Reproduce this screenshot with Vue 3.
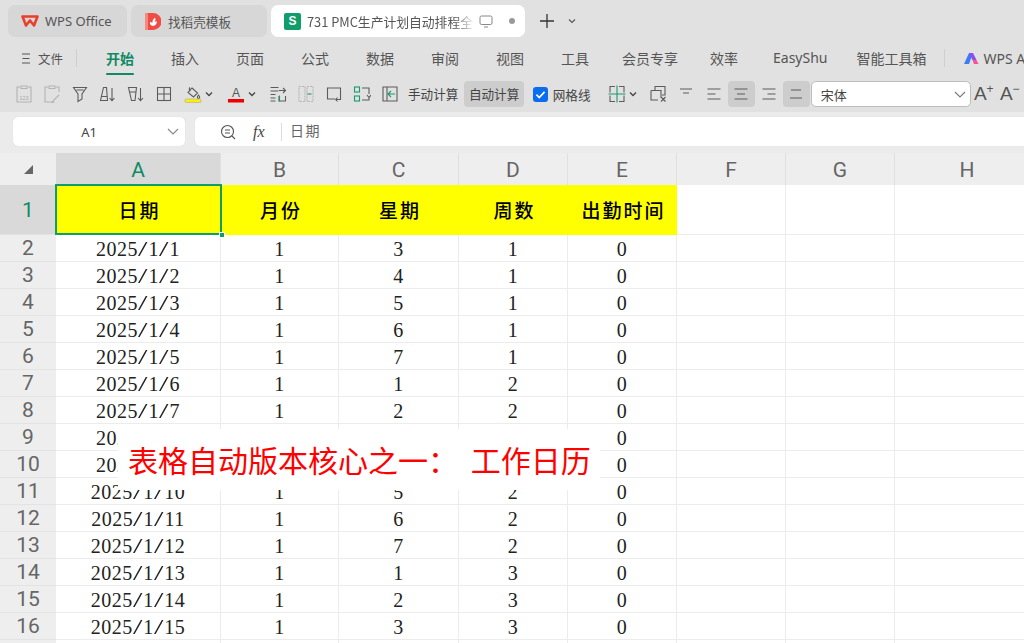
<template>
  <div class="app">
    <!-- tabs -->
    <div class="tabbar">
      <div class="tab tab-wps">
        <svg class="logo-w" viewBox="0 0 18 12"><path d="M1.500 1.500h15L13 10.500 9 5.500 5 10.500z" fill="none" stroke="#e8402c" stroke-width="2.600" stroke-linejoin="round" /></svg>
        <span class="tab-latin">WPS Office</span>
      </div>
      <div class="tab tab-tpl">
        <svg class="logo-d" viewBox="0 0 16 17"><path d="M0 1.500Q0 0 1.500 0H8a8 8 0 0 1 0 17H1.500Q0 17 0 15.500z" fill="#ef4c45" /><path d="M0 1.500Q0 0 1.500 0H3v17H1.500Q0 17 0 15.500z" fill="#f58a80" /><path d="M8 13c-2.500-.5-3.500-2-3-4 1 0 1.800.5 2.300 1.200C7.300 8 8.200 6 10 4.500c.7 2 .6 3-.3 4.500 1-.5 1.600-.6 2.300-.6-.3 2.500-1.800 4.300-4 4.600z" fill="#fff" /></svg>
        <span>找稻壳模板</span>
      </div>
      <div class="tab tab-active">
        <span class="logo-s">S</span>
        <span class="tab-title">731 PMC生产计划自动排程全自动版</span>
        <svg class="tab-monitor" viewBox="0 0 14 13"><rect x="1" y="1" width="12" height="8.500" rx="1.500" /><path d="M5 12h4" /></svg>
        <span class="tab-dot"></span>
      </div>
      <svg class="tab-plus" viewBox="0 0 16 16"><path d="M8 1v14M1 8h14" /></svg>
      <svg class="tab-chev" viewBox="0 0 8 6"><path d="M1 1.500l3 3 3-3" /></svg>
    </div>

    <!-- menu -->
    <div class="menubar">
      <svg class="menu-burger" viewBox="0 0 10 11"><path d="M1 1h8M1.500 5.500h7M1 10h8" /></svg>
      <span class="menu-file">文件</span>
      <span class="menu-sep"></span>
      <span v-for="m in menus" :key="m.label" class="menu-item" :class="[m.cls, { on: m.on }]">{{ m.label }}</span>
      <span class="menu-sep sep-ai"></span>
      <svg class="logo-ai" viewBox="0 0 16 13">
        <path d="M0 12L5 1h4L5 12z" fill="#3d7bf5" />
        <path d="M5 1h4l3.500 7H8.500z" fill="#8a4df0" />
        <path d="M8.500 8h4l2 4h-4.500z" fill="#f0559a" />
      </svg>
      <span class="menu-ai">WPS AI</span>
    </div>

    <!-- toolbar -->
    <div class="toolbar">
      <span class="tool"><svg class="ic off" viewBox="0 0 18 18"><path d="M5 2H2v15h14V2h-3M6 1h6v2.500H6z" /><text x="9" y="14.500" class="ic-txt">123</text></svg></span>
      <span class="tool"><svg class="ic off" viewBox="0 0 18 18"><path d="M5 2H2v15h7M13 2h3v5M6 1h6v2.500H6zM10 16l6-6" /><path d="M10 16l-1 1.500 2.500-.5" /></svg></span>
      <span class="tool"><svg class="ic" viewBox="0 0 18 18"><path d="M2.500 2.500h13L11 9v5l-4 2.500V9zM5.500 5h7" /></svg></span>
      <span class="tool"><svg class="ic" viewBox="0 0 18 18"><path d="M4.500 2.500h3l1 13H1.500zM2.500 11.500h6M13 3v12.500M10.500 13l2.500 2.700 2.500-2.700" /></svg></span>
      <span class="tool"><svg class="ic" viewBox="0 0 18 18"><path d="M1.500 2.500h8l-1.500 13H4.500zM2.500 7h6M13.500 3v12.500M11 13l2.500 2.700L16 13" /></svg></span>
      <span class="tool"><svg class="ic" viewBox="0 0 18 18"><rect x="2.500" y="2.500" width="13" height="13" /><path d="M9 2.500v13M2.500 9h13" /></svg></span>
      <span class="tool tool-wide">
        <svg class="ic" viewBox="0 0 18 18"><path d="M8 3l5.500 5-4 4L4 7.500zM6 2.500C5 3.500 5 5.500 6.500 6M14.500 10c.8 1 1.200 1.600 1.200 2.200a1.200 1.200 0 0 1-2.400 0c0-.6.400-1.200 1.200-2.200z" /><rect class="bar-yellow" x="1" y="14" width="16" height="3.500" rx="1" /></svg>
        <svg class="chev" viewBox="0 0 8 6"><path d="M1 1.500l3 3 3-3" /></svg>
      </span>
      <span class="tool tool-wide">
        <svg class="ic" viewBox="0 0 18 18"><text x="9" y="12" class="ic-a">A</text><rect class="bar-red" x="1" y="14" width="16" height="3.500" /></svg>
        <svg class="chev" viewBox="0 0 8 6"><path d="M1 1.500l3 3 3-3" /></svg>
      </span>
      <span class="tool"><svg class="ic" viewBox="0 0 18 18"><path d="M1.500 2.500h8M1.500 6h8M1.500 9.500h5M1.500 13h5M1.500 16h5M10 5.500h6.500M14 3l2.500 2.500L14 8M10 11v5h6.500v-5" /><path class="gr" d="M10.500 10.500v6" /></svg></span>
      <span class="tool"><svg class="ic off" viewBox="0 0 18 18"><rect x="2" y="1.500" width="6" height="15" stroke-dasharray="2 1" /><rect x="10" y="1.500" width="6" height="15" stroke-dasharray="2 1" /><path class="gr" d="M10.500 9h4" /></svg></span>
      <span class="tool"><svg class="ic" viewBox="0 0 18 18"><path d="M10 14H2.500V3h13v8M15.500 11v3.500H11M12.500 12.500L10.700 14.500l1.800 2" /></svg></span>
      <span class="tool"><svg class="ic" viewBox="0 0 18 18"><rect class="gr" x="1.500" y="2" width="5" height="5" /><rect class="gr" x="1.500" y="11" width="5" height="5" /><path d="M9 3h7v6M9 15h7v-3M14 10l2 2.500 2-2.500" /></svg></span>
      <span class="tool"><svg class="ic" viewBox="0 0 18 18"><path d="M6 2H2v14h4M6 2h10v14H6z" /><path class="gr" d="M14 9H7.500M10 6L7 9l3 3" /></svg></span>

      <span class="calc">手动计算</span>
      <span class="calc calc-on">自动计算</span>
      <label class="grid-check">
        <span class="check-box"><svg viewBox="0 0 14 14"><path d="M3.200 7.200l2.600 2.600 5-5.300" /></svg></span>
        <span>网格线</span>
      </label>

      <span class="tool tool-wide tool-split">
        <svg class="ic" viewBox="0 0 18 18"><path d="M7 1.500H2v6M11 1.500h5v6M7 16.500H2v-6M11 16.500h5v-6" /><path class="gr" d="M9 .5v17M.5 9h17" /></svg>
        <svg class="chev" viewBox="0 0 8 6"><path d="M1 1.500l3 3 3-3" /></svg>
      </span>
      <span class="tool"><svg class="ic" viewBox="0 0 18 18"><path d="M6 5V1.500h10V10h-3M2 5.500h10V13M2 5.500V15h7M12 12l4.500 4.500M16.500 12L12 16.500" /></svg></span>
      <span class="tool"><svg class="ic" viewBox="0 0 18 18"><path d="M3 4h12M6 8h6" /></svg></span>
      <span class="tool"><svg class="ic" viewBox="0 0 18 18"><path d="M2.500 4h13M2.500 9h8M2.500 14h13" /></svg></span>
      <span class="tool tool-sel"><svg class="ic" viewBox="0 0 18 18"><path d="M2.500 4h13M5 9h8M2.500 14h13" /></svg></span>
      <span class="tool"><svg class="ic" viewBox="0 0 18 18"><path d="M2.500 4h13M7.500 9h8M2.500 14h13" /></svg></span>
      <span class="tool tool-sel"><svg class="ic" viewBox="0 0 18 18"><path d="M4 5h10M3 13h12" /></svg></span>

      <div class="font-select">
        <span>宋体</span>
        <svg viewBox="0 0 12 7"><path d="M1 1l5 5 5-5" /></svg>
      </div>
      <span class="font-size">A<sup>+</sup></span>
      <span class="font-size">A<sup>−</sup></span>
    </div>

    <!-- formula bar -->
    <div class="formula-row">
      <div class="name-box">
        <span>A1</span>
        <svg viewBox="0 0 12 7"><path d="M1 1l5 5 5-5" /></svg>
      </div>
      <div class="formula-box">
        <svg class="fx-zoom" viewBox="0 0 16 16"><circle cx="7.500" cy="7.500" r="6" /><path d="M5 6h5M5 9h5M12 12l3 3" /></svg>
        <i class="fx">fx</i>
        <span class="formula-sep"></span>
        <span class="formula-text">日期</span>
      </div>
    </div>

    <!-- sheet -->
    <div class="sheet">
      <div class="corner"><span class="corner-mark"></span></div>
      <div v-for="(c, i) in cols" :key="c" class="col-head" :class="{ sel: i === 0 }">{{ c }}</div>

      <div class="row-head row-first sel">1</div>
      <div v-for="(h, i) in heads" :key="h" class="cell head-cell" :class="{ 'cell-active': i === 0 }">
        {{ h }}
        <template v-if="i === 0"><span class="sel-box"></span><span class="sel-handle"></span></template>
      </div>
      <div v-for="c in 3" :key="'blank' + c" class="cell cell-tall"></div>

      <template v-for="(r, n) in rows" :key="n">
        <div class="row-head">{{ n + 2 }}</div>
        <div class="cell num">2025<span class="sl">/</span>1<span class="sl">/</span>{{ r[0] }}</div>
        <div class="cell num">1</div>
        <div class="cell num">{{ r[1] }}</div>
        <div class="cell num">{{ r[2] }}</div>
        <div class="cell num">0</div>
        <div class="cell"></div>
        <div class="cell"></div>
        <div class="cell"></div>
      </template>

      <div class="caption">表格自动版本核心之一： 工作日历</div>
    </div>
  </div>
</template>

<script setup>
const menus = [
  { label: '开始', on: true },
  { label: '插入' },
  { label: '页面' },
  { label: '公式' },
  { label: '数据' },
  { label: '审阅' },
  { label: '视图' },
  { label: '工具' },
  { label: '会员专享', cls: 'm-vip' },
  { label: '效率', cls: 'm-eff' },
  { label: 'EasyShu', cls: 'm-easy' },
  { label: '智能工具箱', cls: 'm-box' },
]

const cols = ['A', 'B', 'C', 'D', 'E', 'F', 'G', 'H']
const heads = ['日期', '月份', '星期', '周数', '出勤时间']

// weekday and week number follow from the date, 2025/1/1 was a Wednesday
const rows = []
for (let d = 1; d <= 16; d++) {
  const weekday = ((d + 1) % 7) + 1
  const week = d <= 5 ? 1 : d <= 12 ? 2 : 3
  rows.push([d, weekday, week])
}
</script>

<style>
html, body { margin: 0; background: #e1e1e1; }
</style>

<style scoped>
.app { width: 1024px; height: 643px; overflow: hidden; background: #e1e1e1; color: #444; font-family: "Noto Sans CJK SC", "Noto Sans", sans-serif; font-size: 13px; display: flex; flex-direction: column; }

.tabbar { height: 40px; flex: none; display: flex; align-items: center; padding: 2px 0 0 8px; box-sizing: border-box; gap: 4px; }
.tab { height: 32px; border-radius: 7px; background: #d7d7d7; display: flex; align-items: center; box-sizing: border-box; white-space: nowrap; font-size: 12.600px; color: #555; }
.tab-wps { width: 119px; padding-left: 13px; }
.tab-tpl { width: 136px; padding-left: 14px; }
.tab-active { width: 254px; padding-left: 13px; background: #fff; position: relative; }
.tab-latin { font-family: "Noto Sans", sans-serif; font-size: 13px; }
.logo-w { width: 18px; height: 12px; margin-right: 6px; }
.logo-d { width: 16px; height: 17px; margin-right: 7px; }
.logo-s { width: 17px; height: 17px; border-radius: 2px; background: #0f9d6b; color: #fff; font: 700 12px "Liberation Sans", sans-serif; display: flex; align-items: center; justify-content: center; margin-right: 6px; }
.tab-title { width: 168px; overflow: hidden; font-size: 12.800px; color: #555; -webkit-mask-image: linear-gradient(90deg, #000 88%, transparent); mask-image: linear-gradient(90deg, #000 88%, transparent); }
.tab-monitor { width: 14px; height: 13px; margin-left: 4px; fill: none; stroke: #888; stroke-width: 1; }
.tab-dot { width: 6px; height: 6px; border-radius: 50%; background: #999; margin-left: 16px; }
.tab-plus { width: 16px; height: 16px; margin-left: 10px; fill: none; stroke: #333; stroke-width: 1.300; }
.tab-chev { width: 8px; height: 6px; margin-left: 9px; fill: none; stroke: #555; stroke-width: 1.100; }

.menubar { height: 36px; flex: none; display: flex; align-items: center; padding-left: 21px; font-size: 14px; white-space: nowrap; color: #555; }
.menu-burger { width: 10px; height: 11px; flex: none; fill: none; stroke: #555; stroke-width: 1; }
.menu-file { font-size: 12.500px; margin-left: 7px; flex: none; }
.menu-sep { width: 1px; height: 18px; flex: none; background: #cfcfcf; margin: 0 29px 0 13px; }
.menu-item { margin-right: 37px; position: relative; line-height: 36px; flex: none; }
.menu-item.on { font-weight: 700; color: #0f8a64; }
.menu-item.on::after { content: ""; position: absolute; left: 0; right: 0; bottom: 1px; height: 2px; border-radius: 1px; background: #0f8a64; }
.m-vip { margin-left: -4px; margin-right: 32px; }
.m-eff { margin-right: 35px; }
.m-easy { margin-right: 29px; font-family: "Noto Sans", sans-serif; }
.m-box { margin-right: 0; }
.sep-ai { margin: 0 19px 0 17px; }
.logo-ai { width: 16px; height: 13px; flex: none; }
.menu-ai { margin-left: 4px; flex: none; font-family: "Noto Sans", sans-serif; }

.toolbar { height: 36px; flex: none; display: flex; align-items: center; padding: 0 0 0 10px; box-sizing: border-box; white-space: nowrap; }
.tool { width: 28px; height: 26px; flex: none; display: flex; align-items: center; justify-content: center; border-radius: 4px; box-sizing: border-box; }
.tool-wide { width: 43px; justify-content: flex-start; padding-left: 6px; gap: 3px; }
.tool-split { width: 42px; }
.tool-sel { background: #cdcdcd; width: 27px; }
.ic { width: 18px; height: 18px; fill: none; stroke: #5c5c5c; stroke-width: 1.100; flex: none; }
.ic.off { stroke: #b4b4b4; }
.ic .gr { stroke: #1a9a70; }
.ic-txt { font: 5.500px "Liberation Sans", sans-serif; fill: #aaa; stroke: none; text-anchor: middle; }
.ic-a { font: 12px "Liberation Sans", sans-serif; fill: #555; stroke: none; text-anchor: middle; }
.bar-yellow { fill: #ffef00; stroke: #a9a9a9; stroke-width: .6; }
.bar-red { fill: #f00000; stroke: none; }
.chev { width: 8px; height: 6px; fill: none; stroke: #444; stroke-width: 1.300; flex: none; }
.calc { height: 26px; line-height: 26px; padding: 0 4px; border-radius: 4px; font-size: 12.600px; color: #444; flex: none; }
.calc-on { background: #cdcdcd; margin-left: 2px; padding: 0 4.500px; }
.grid-check { display: flex; align-items: center; gap: 5px; margin-left: 9px; font-size: 12.600px; flex: none; width: 69px; }
.check-box { width: 15px; height: 15px; border-radius: 3px; background: #0a6cf0; display: flex; }
.check-box svg { width: 15px; height: 15px; fill: none; stroke: #fff; stroke-width: 1.600; }
.font-select { width: 160px; height: 26px; flex: none; margin-left: 1px; box-sizing: border-box; background: #fff; border: 1px solid #bdbdbd; border-radius: 5px; display: flex; align-items: center; justify-content: space-between; padding: 0 4px 0 9px; font-size: 13px; }
.font-select svg { width: 12px; height: 7px; fill: none; stroke: #777; stroke-width: 1.100; }
.font-size { width: 26px; flex: none; text-align: center; font: 19px "Liberation Sans", sans-serif; color: #555; margin-left: 0; }
.font-size sup { font-size: 12px; line-height: 0; vertical-align: 7px; }

.formula-row { height: 41px; flex: none; background: #ebebeb; display: flex; gap: 10px; padding: 5px 0 0 13px; box-sizing: border-box; }
.name-box { width: 172px; height: 29px; background: #fff; border-radius: 5px; position: relative; display: flex; align-items: center; justify-content: center; box-shadow: 0 0 1px #ccc; font: 13px "Noto Sans", sans-serif; }
.name-box span { margin-right: 20px; }
.name-box svg { position: absolute; right: 6px; top: 11px; width: 12px; height: 7px; fill: none; stroke: #888; stroke-width: 1.100; }
.formula-box { flex: 1; height: 29px; background: #fff; border-radius: 5px 0 0 5px; box-shadow: 0 0 1px #ccc; display: flex; align-items: center; padding-left: 25px; }
.fx-zoom { width: 16px; height: 16px; fill: none; stroke: #555; stroke-width: 1.100; }
.fx { font: italic 16px "Liberation Serif", serif; margin-left: 17px; color: #444; width: 20px; }
.formula-sep { width: 1px; height: 18px; background: #ddd; margin-left: 8px; }
.formula-text { margin: 0 0 3px 8px; font-size: 14px; letter-spacing: 1.500px; color: #666; }

.sheet { flex: none; position: relative; display: grid; grid-template-columns: 56px 165px 118px 120px 109px 109px 109px 109px 145px; grid-template-rows: 32px 50px repeat(16, 27px); background: #fff; width: 1040px; }
.corner, .col-head, .row-head { background: #eee; display: flex; align-items: center; justify-content: center; font: 21px Roboto, "Noto Sans", sans-serif; color: #666; box-sizing: border-box; }
.col-head { border-right: 1px solid #e0e0e0; padding-top: 1px; }
.row-head { border-bottom: 1px solid #e3e3e3; }
.col-head.sel { background: #d9d9d9; color: #0f8a64; }
.row-head.sel { background: #d9d9d9; color: #0f8a64; }
.corner-mark { width: 0; height: 0; border-style: solid; border-width: 0 0 9px 9px; border-color: transparent transparent #666 transparent; }
.cell { border-right: 1px solid #ececec; border-bottom: 1px solid #ececec; box-sizing: border-box; display: flex; align-items: center; justify-content: center; color: #111; position: relative; }
.num { font: 20px "Liberation Serif", serif; letter-spacing: .5px; white-space: pre; padding-top: 3px; color: #222; }
.sl { display: inline-block; margin: 0 2.200px; transform: scaleX(1.700); }
.head-cell { background: #ff0; border: none; font-size: 19px; font-weight: 500; letter-spacing: 2px; color: #000; padding: 0 0 2px 2px; }
.sel-box { position: absolute; inset: -1px -1px 0 -1px; border: 2px solid #0f9d6b; z-index: 1; }
.sel-handle { position: absolute; right: -4px; bottom: -3px; width: 4px; height: 4px; background: #0f9d6b; border: 1px solid #fff; z-index: 2; }

.caption { position: absolute; left: 118px; top: 276px; width: 482px; height: 61px; box-sizing: border-box; padding-left: 10px; background: #fff; color: #f00; font-size: 30px; line-height: 60px; white-space: pre; word-spacing: 6px; }
</style>
